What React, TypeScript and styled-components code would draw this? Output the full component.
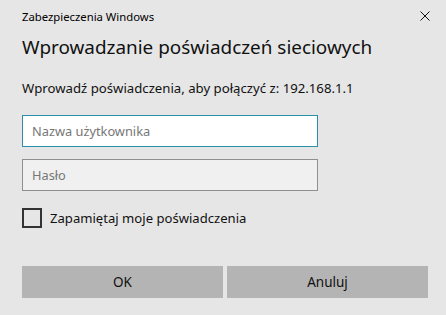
import styled, { createGlobalStyle } from "styled-components"

const GlobalStyle = createGlobalStyle`
  html, body {
    margin: 0;
    padding: 0;
    background: #e6e6e6;
  }
  * {
    box-sizing: border-box;
  }
`

const Dialog = styled.div`
  width: 446px;
  height: 315px;
  background: #e6e6e6;
  padding: 0 18px 0 22px;
  font-family: "Segoe UI", "Noto Sans", "Open Sans", sans-serif;
  color: #000;
  display: flex;
  flex-direction: column;
`

const TitleBar = styled.div`
  display: flex;
  align-items: center;
  justify-content: space-between;
  height: 30px;
  padding-top: 2px;
`

const WindowTitle = styled.span`
  font-size: 11.3px;
  color: #000;
`

const CloseButton = styled.button`
  border: none;
  background: transparent;
  padding: 0;
  width: 20px;
  height: 20px;
  display: flex;
  align-items: center;
  justify-content: center;
  margin-right: -7px;
`

const Heading = styled.h1`
  margin: 3px 0 0;
  font-size: 18.9px;
  font-weight: 400;
  line-height: 28px;
  color: #111;
`

const Message = styled.p`
  margin: 18px 0 0;
  font-size: 13.2px;
  line-height: 18px;
  color: #111;
`

const Field = styled.input<{ focused?: boolean }>`
  display: block;
  width: 296px;
  height: 32px;
  margin-top: ${(p) => (p.focused ? "18px" : "12px")};
  padding: 0 9px;
  font-family: inherit;
  font-size: 12.8px;
  outline: none;
  border: 1.5px solid ${(p) => (p.focused ? "#2a8fa8" : "#8f8f8f")};
  background: ${(p) => (p.focused ? "#ffffff" : "#f0f0f0")};
  color: #000;
  caret-color: #000;

  &::placeholder {
    color: #777;
  }
`

const CheckRow = styled.label`
  display: flex;
  align-items: center;
  gap: 8px;
  margin-top: 17px;
  font-size: 13.1px;
  color: #111;
`

const Box = styled.span`
  width: 20px;
  height: 20px;
  border: 2px solid #333;
  background: transparent;
`

const Buttons = styled.div`
  display: grid;
  grid-template-columns: 1fr 1fr;
  gap: 4px;
  margin-top: 38px;
  width: 406px;
`

const Button = styled.button`
  height: 32px;
  border: none;
  background: #b4b4b4;
  font-family: inherit;
  font-size: 13.5px;
  color: #111;
`

export default function App() {
  return (
    <>
      <GlobalStyle />
      <Dialog>
        <TitleBar>
          <WindowTitle>Zabezpieczenia Windows</WindowTitle>
          <CloseButton aria-label="Zamknij">
            <svg width="10" height="10" viewBox="0 0 10 10">
              <path d="M0.5 0.5 L9.5 9.5 M9.5 0.5 L0.5 9.5" stroke="#111" strokeWidth="1" />
            </svg>
          </CloseButton>
        </TitleBar>
        <Heading>Wprowadzanie poświadczeń sieciowych</Heading>
        <Message>Wprowadź poświadczenia, aby połączyć z: 192.168.1.1</Message>
        <Field focused placeholder="Nazwa użytkownika" autoFocus />
        <Field type="password" placeholder="Hasło" />
        <CheckRow>
          <Box />
          Zapamiętaj moje poświadczenia
        </CheckRow>
        <Buttons>
          <Button>OK</Button>
          <Button>Anuluj</Button>
        </Buttons>
      </Dialog>
    </>
  )
}
